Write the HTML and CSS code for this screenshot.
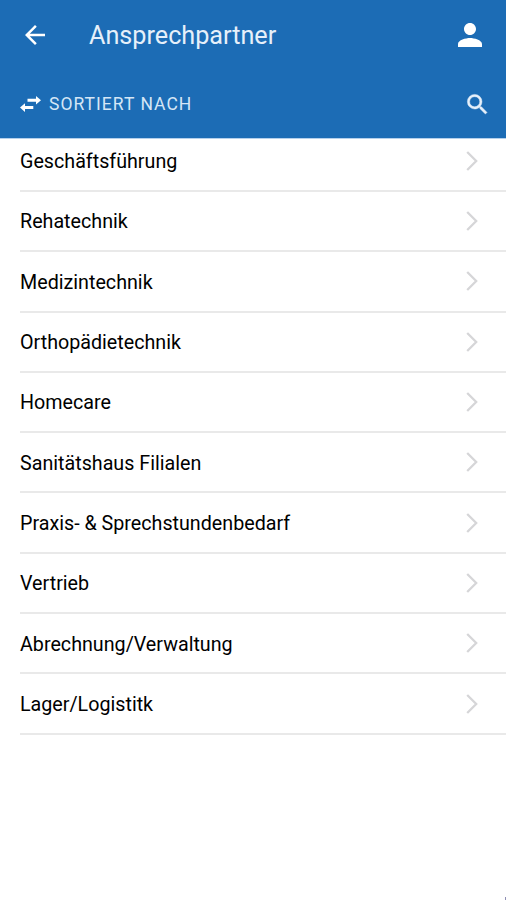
FILE: index.html
```html
<!DOCTYPE html>
<html lang="de">
<head>
<meta charset="utf-8">
<title>Ansprechpartner</title>
<link rel="stylesheet" href="styles.css">
</head>
<body>
<header class="header">
  <div class="appbar">
    <svg class="icon back" viewBox="0 0 24 24"><path d="M20 11H7.83l5.59-5.59L12 4l-8 8 8 8 1.41-1.41L7.83 13H20z"/></svg>
    <h1 class="title">Ansprechpartner</h1>
    <svg class="icon user" viewBox="0 0 24 24"><path d="M12 12c2.21 0 4-1.79 4-4s-1.79-4-4-4-4 1.79-4 4 1.79 4 4 4zm0 2c-2.67 0-8 1.34-8 4v2h16v-2c0-2.66-5.33-4-8-4z"/></svg>
  </div>
  <div class="toolbar">
    <svg class="icon swap" viewBox="0 0 21 16"><path d="M7.500 2.800H16V0L21 4.300 16 8.600V5.800H7.500zM13.300 10.100H5V7.300L0 11.600 5 15.900V13.100h8.300z"/></svg>
    <span class="sort">SORTIERT NACH</span>
    <svg class="icon search" viewBox="0 0 24 24"><path d="M15.5 14h-.79l-.28-.27A6.47 6.47 0 0 0 16 9.5 6.5 6.5 0 1 0 9.5 16c1.61 0 3.09-.59 4.23-1.57l.27.28v.79l5 4.99L20.49 19zm-6 0a4.5 4.5 0 1 1 0-9 4.5 4.5 0 0 1 0 9z"/></svg>
  </div>
</header>
<ul class="list">
  <li class="row"><span class="label">Geschäftsführung</span><svg class="chevron" viewBox="0 0 12 20"><path d="M1.2 1L10.200 10l-9 9"/></svg></li>
  <li class="row"><span class="label">Rehatechnik</span><svg class="chevron" viewBox="0 0 12 20"><path d="M1.200 1L10.200 10l-9 9"/></svg></li>
  <li class="row"><span class="label">Medizintechnik</span><svg class="chevron" viewBox="0 0 12 20"><path d="M1.200 1L10.200 10l-9 9"/></svg></li>
  <li class="row"><span class="label">Orthopädietechnik</span><svg class="chevron" viewBox="0 0 12 20"><path d="M1.200 1L10.200 10l-9 9"/></svg></li>
  <li class="row"><span class="label">Homecare</span><svg class="chevron" viewBox="0 0 12 20"><path d="M1.200 1L10.200 10l-9 9"/></svg></li>
  <li class="row"><span class="label">Sanitätshaus Filialen</span><svg class="chevron" viewBox="0 0 12 20"><path d="M1.200 1L10.200 10l-9 9"/></svg></li>
  <li class="row"><span class="label">Praxis- &amp; Sprechstundenbedarf</span><svg class="chevron" viewBox="0 0 12 20"><path d="M1.200 1L10.200 10l-9 9"/></svg></li>
  <li class="row"><span class="label">Vertrieb</span><svg class="chevron" viewBox="0 0 12 20"><path d="M1.200 1L10.200 10l-9 9"/></svg></li>
  <li class="row"><span class="label">Abrechnung/Verwaltung</span><svg class="chevron" viewBox="0 0 12 20"><path d="M1.200 1L10.200 10l-9 9"/></svg></li>
  <li class="row"><span class="label">Lager/Logistitk</span><svg class="chevron" viewBox="0 0 12 20"><path d="M1.200 1L10.200 10l-9 9"/></svg></li>
</ul>
<i class="corner"></i>
</body>
</html>
```
FILE: styles.css
```css
* { box-sizing: border-box; }
body { margin: 0; height: 900px; overflow: hidden; background: #fff; color: #000; font-family: Roboto, sans-serif; position: relative; }
.header { height: 139px; background: #1c6cb5; color: #fff; border-bottom: 1px solid #b4d0ec; }
.appbar { height: 70px; display: flex; align-items: center; padding: 0 18px 0 20px; }
.icon { display: block; flex: none; fill: currentColor; }
.back { width: 30px; height: 30px; }
.title { margin: 2px auto 0 39px; font-size: 25.200px; line-height: 30px; font-weight: 400; color: #e6f0fa; }
.user { width: 36px; height: 36px; }
.toolbar { height: 67px; display: flex; align-items: center; padding: 1px 15px 0 20px; }
.swap { width: 21px; height: 16px; }
.sort { margin: 0 auto 0 8px; font-size: 17.5px; letter-spacing: 1.020px; color: #d5e6f6; }
.search { width: 27px; height: 27px; color: #e6f0fa; stroke: currentColor; stroke-width: .4; }
.list { list-style: none; margin: -7.300px 0 0; padding: 0 0 0 20px; }
.row { height: 60.300px; display: flex; align-items: center; justify-content: space-between; padding-right: 28px; border-bottom: 2px solid #e9e9e9; font-size: 19.700px; }
.label { padding-top: 1.600px; }
.chevron { width: 12px; height: 20px; fill: none; stroke: #d6d6d8; stroke-width: 2.3; }
.corner { position: absolute; right: 0; bottom: 0; width: 1px; height: 3px; background: #8f8fb5; }
```
